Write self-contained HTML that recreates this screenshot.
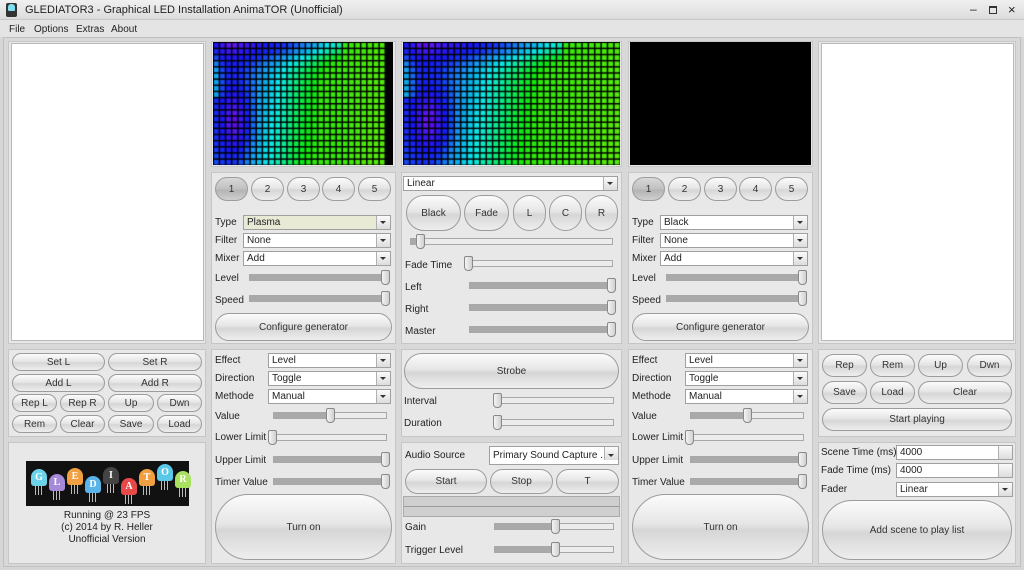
<!DOCTYPE html>
<html><head><meta charset="utf-8"><style>
*{box-sizing:border-box;margin:0;padding:0}
body{width:1024px;height:570px;overflow:hidden;background:#d6d6d6;font-family:"Liberation Sans",sans-serif;font-size:10px;color:#222;position:relative}
div,canvas{position:absolute}
.p{background:#e8e8e8;border:1px solid #c6c6c6}
.b{border:1px solid #9c9c9c;border-radius:999px;background:linear-gradient(#fbfbfb,#e6e6e6 45%,#d6d6d6 55%,#eeeeee);display:flex;align-items:center;justify-content:center;font-size:10px;color:#333}
.b.on{background:linear-gradient(#d8d8d8,#c0c0c0 50%,#b4b4b4 55%,#cfcfcf)}
.l{font-size:10px;color:#222;white-space:nowrap}
.c{background:#fff;border:1px solid #a0a0a0;height:15px;font-size:10px;line-height:13px;padding-left:3px;white-space:nowrap;overflow:hidden}
.c::after{content:"";position:absolute;right:0;top:0;width:13px;height:13px;border-left:1px solid #b0b0b0;background:linear-gradient(#fafafa,#ddd)}
.c i{position:absolute;right:4px;top:5px;width:0;height:0;border-left:3px solid transparent;border-right:3px solid transparent;border-top:3px solid #333;z-index:2}
.s{height:7px;border:1px solid #a8a8a8;background:#ececec}
.s .f{left:0;top:0;bottom:0;background:#a9a9a9}
.s .t{top:-5px;width:9px;height:15px;border:1px solid #888;border-radius:2px 2px 4px 4px;background:linear-gradient(90deg,#f4f4f4,#d0d0d0)}
.w{background:#fff;border:1px solid #b8b8b8}
</style></head><body>
<div style="left:0;top:0;width:1024px;height:20px;background:linear-gradient(#f0f0f0,#dcdcdc);border-bottom:1px solid #c8c8c8"></div>
<div style="left:6px;top:3px;width:11px;height:14px;background:#333;border-radius:2px"></div>
<div style="left:8px;top:4px;width:7px;height:7px;background:#7fe0f0;border-radius:3px 3px 1px 1px"></div>
<div class="l" style="left:25px;top:4px;font-size:11px;color:#222">GLEDIATOR3 - Graphical LED Installation AnimaTOR (Unofficial)</div>
<div class="l" style="left:970px;top:2px;font-size:12px">&#8211;</div>
<div style="left:989px;top:6px;width:8px;height:8px;border:1px solid #333;border-top-width:2px"></div>
<div class="l" style="left:1008px;top:2px;font-size:13px">&#215;</div>
<div style="left:0;top:20px;width:1024px;height:17px;background:#e4e4e4"></div>
<div class="l" style="left:9px;top:24px">File</div>
<div class="l" style="left:34px;top:24px">Options</div>
<div class="l" style="left:76px;top:24px">Extras</div>
<div class="l" style="left:111px;top:24px">About</div>
<div style="left:3px;top:37px;width:1018px;height:530px;background:#d8d8d8;border:1px solid #c0c0c0"></div>

<div class="p" style="left:8px;top:41px;width:198px;height:303px"></div>
<div class="w" style="left:11px;top:43px;width:193px;height:298px"></div>
<div class="p" style="left:818px;top:41px;width:198px;height:303px"></div>
<div class="w" style="left:821px;top:43px;width:193px;height:298px"></div>

<div class="p" style="left:211px;top:41px;width:185px;height:126px"></div>
<canvas id="c1" width="180" height="123" style="left:213px;top:42px"></canvas>
<div class="p" style="left:401px;top:41px;width:221px;height:126px"></div>
<canvas id="c2" width="217" height="123" style="left:403px;top:42px"></canvas>
<div class="p" style="left:628px;top:41px;width:185px;height:126px"></div>
<div style="left:630px;top:42px;width:181px;height:123px;background:#000"></div>

<div class="p" style="left:211px;top:172px;width:185px;height:172px"></div>
<div class="b on" style="left:215px;top:177px;width:33px;height:24px">1</div>
<div class="b" style="left:251px;top:177px;width:33px;height:24px">2</div>
<div class="b" style="left:287px;top:177px;width:33px;height:24px">3</div>
<div class="b" style="left:322px;top:177px;width:33px;height:24px">4</div>
<div class="b" style="left:358px;top:177px;width:33px;height:24px">5</div>
<div class="l" style="left:215px;top:217px">Type</div><div class="c" style="left:243px;top:215px;width:148px;background:#e8ead6">Plasma<i></i></div>
<div class="l" style="left:215px;top:235px">Filter</div><div class="c" style="left:243px;top:233px;width:148px">None<i></i></div>
<div class="l" style="left:215px;top:253px">Mixer</div><div class="c" style="left:243px;top:251px;width:148px">Add<i></i></div>
<div class="l" style="left:215px;top:273px">Level</div><div class="s" style="left:249px;top:274px;width:140px"><div class="f" style="right:0"></div><div class="t" style="left:131px"></div></div>
<div class="l" style="left:215px;top:295px">Speed</div><div class="s" style="left:249px;top:295px;width:140px"><div class="f" style="right:0"></div><div class="t" style="left:131px"></div></div>
<div class="b" style="left:215px;top:313px;width:177px;height:28px">Configure generator</div>

<div class="p" style="left:628px;top:172px;width:185px;height:172px"></div>
<div class="b on" style="left:632px;top:177px;width:33px;height:24px">1</div>
<div class="b" style="left:668px;top:177px;width:33px;height:24px">2</div>
<div class="b" style="left:704px;top:177px;width:33px;height:24px">3</div>
<div class="b" style="left:739px;top:177px;width:33px;height:24px">4</div>
<div class="b" style="left:775px;top:177px;width:33px;height:24px">5</div>
<div class="l" style="left:632px;top:217px">Type</div><div class="c" style="left:660px;top:215px;width:148px">Black<i></i></div>
<div class="l" style="left:632px;top:235px">Filter</div><div class="c" style="left:660px;top:233px;width:148px">None<i></i></div>
<div class="l" style="left:632px;top:253px">Mixer</div><div class="c" style="left:660px;top:251px;width:148px">Add<i></i></div>
<div class="l" style="left:632px;top:273px">Level</div><div class="s" style="left:666px;top:274px;width:140px"><div class="f" style="right:0"></div><div class="t" style="left:131px"></div></div>
<div class="l" style="left:632px;top:295px">Speed</div><div class="s" style="left:666px;top:295px;width:140px"><div class="f" style="right:0"></div><div class="t" style="left:131px"></div></div>
<div class="b" style="left:632px;top:313px;width:177px;height:28px">Configure generator</div>

<div class="p" style="left:401px;top:172px;width:221px;height:172px"></div>
<div class="c" style="left:403px;top:176px;width:215px">Linear<i></i></div>
<div class="b" style="left:406px;top:195px;width:55px;height:36px">Black</div>
<div class="b" style="left:464px;top:195px;width:45px;height:36px">Fade</div>
<div class="b" style="left:513px;top:195px;width:33px;height:36px">L</div>
<div class="b" style="left:549px;top:195px;width:33px;height:36px">C</div>
<div class="b" style="left:585px;top:195px;width:33px;height:36px">R</div>
<div class="s" style="left:410px;top:238px;width:203px"><div class="f" style="width:8px"></div><div class="t" style="left:5px"></div></div>
<div class="l" style="left:405px;top:260px">Fade Time</div><div class="s" style="left:464px;top:260px;width:149px"><div class="t" style="left:-1px"></div></div>
<div class="l" style="left:405px;top:282px">Left</div><div class="s" style="left:469px;top:282px;width:146px"><div class="f" style="right:0"></div><div class="t" style="left:137px"></div></div>
<div class="l" style="left:405px;top:304px">Right</div><div class="s" style="left:469px;top:304px;width:146px"><div class="f" style="right:0"></div><div class="t" style="left:137px"></div></div>
<div class="l" style="left:405px;top:326px">Master</div><div class="s" style="left:469px;top:326px;width:146px"><div class="f" style="right:0"></div><div class="t" style="left:137px"></div></div>

<div class="p" style="left:8px;top:349px;width:198px;height:88px"></div>
<div class="b" style="left:12px;top:353px;width:93px;height:18px">Set L</div>
<div class="b" style="left:108px;top:353px;width:94px;height:18px">Set R</div>
<div class="b" style="left:12px;top:374px;width:93px;height:18px">Add L</div>
<div class="b" style="left:108px;top:374px;width:94px;height:18px">Add R</div>
<div class="b" style="left:12px;top:394px;width:45px;height:18px">Rep L</div>
<div class="b" style="left:60px;top:394px;width:45px;height:18px">Rep R</div>
<div class="b" style="left:108px;top:394px;width:46px;height:18px">Up</div>
<div class="b" style="left:157px;top:394px;width:45px;height:18px">Dwn</div>
<div class="b" style="left:12px;top:415px;width:45px;height:18px">Rem</div>
<div class="b" style="left:60px;top:415px;width:45px;height:18px">Clear</div>
<div class="b" style="left:108px;top:415px;width:46px;height:18px">Save</div>
<div class="b" style="left:157px;top:415px;width:45px;height:18px">Load</div>
<div class="p" style="left:8px;top:442px;width:198px;height:122px"></div>
<div style="left:26px;top:461px;width:163px;height:45px;background:#111"></div>
<div id="leds"></div>
<div class="l" style="left:10px;top:510px;width:194px;text-align:center;line-height:12px">Running @ 23 FPS<br>(c) 2014 by R. Heller<br>Unofficial Version</div>

<div class="p" style="left:211px;top:349px;width:185px;height:215px"></div>
<div class="l" style="left:215px;top:355px">Effect</div><div class="c" style="left:268px;top:353px;width:123px">Level<i></i></div>
<div class="l" style="left:215px;top:373px">Direction</div><div class="c" style="left:268px;top:371px;width:123px">Toggle<i></i></div>
<div class="l" style="left:215px;top:391px">Methode</div><div class="c" style="left:268px;top:389px;width:123px">Manual<i></i></div>
<div class="l" style="left:215px;top:411px">Value</div><div class="s" style="left:273px;top:412px;width:114px"><div class="f" style="width:57px"></div><div class="t" style="left:52px"></div></div>
<div class="l" style="left:215px;top:432px">Lower Limit</div><div class="s" style="left:269px;top:434px;width:118px"><div class="t" style="left:-2px"></div></div>
<div class="l" style="left:215px;top:455px">Upper Limit</div><div class="s" style="left:273px;top:456px;width:116px"><div class="f" style="right:0"></div><div class="t" style="left:107px"></div></div>
<div class="l" style="left:215px;top:477px">Timer Value</div><div class="s" style="left:273px;top:478px;width:116px"><div class="f" style="right:0"></div><div class="t" style="left:107px"></div></div>
<div class="b" style="left:215px;top:494px;width:177px;height:66px">Turn on</div>

<div class="p" style="left:628px;top:349px;width:185px;height:215px"></div>
<div class="l" style="left:632px;top:355px">Effect</div><div class="c" style="left:685px;top:353px;width:123px">Level<i></i></div>
<div class="l" style="left:632px;top:373px">Direction</div><div class="c" style="left:685px;top:371px;width:123px">Toggle<i></i></div>
<div class="l" style="left:632px;top:391px">Methode</div><div class="c" style="left:685px;top:389px;width:123px">Manual<i></i></div>
<div class="l" style="left:632px;top:411px">Value</div><div class="s" style="left:690px;top:412px;width:114px"><div class="f" style="width:57px"></div><div class="t" style="left:52px"></div></div>
<div class="l" style="left:632px;top:432px">Lower Limit</div><div class="s" style="left:686px;top:434px;width:118px"><div class="t" style="left:-2px"></div></div>
<div class="l" style="left:632px;top:455px">Upper Limit</div><div class="s" style="left:690px;top:456px;width:116px"><div class="f" style="right:0"></div><div class="t" style="left:107px"></div></div>
<div class="l" style="left:632px;top:477px">Timer Value</div><div class="s" style="left:690px;top:478px;width:116px"><div class="f" style="right:0"></div><div class="t" style="left:107px"></div></div>
<div class="b" style="left:632px;top:494px;width:177px;height:66px">Turn on</div>

<div class="p" style="left:401px;top:349px;width:221px;height:88px"></div>
<div class="b" style="left:404px;top:353px;width:215px;height:36px">Strobe</div>
<div class="l" style="left:404px;top:396px">Interval</div><div class="s" style="left:494px;top:397px;width:120px"><div class="t" style="left:-2px"></div></div>
<div class="l" style="left:404px;top:418px">Duration</div><div class="s" style="left:494px;top:419px;width:120px"><div class="t" style="left:-2px"></div></div>

<div class="p" style="left:401px;top:442px;width:221px;height:122px"></div>
<div class="l" style="left:405px;top:450px">Audio Source</div>
<div class="c" style="left:489px;top:446px;width:130px;height:19px;line-height:17px">Primary Sound Capture ...<i style="top:7px"></i></div>
<div class="b" style="left:405px;top:469px;width:82px;height:25px">Start</div>
<div class="b" style="left:490px;top:469px;width:63px;height:25px">Stop</div>
<div class="b" style="left:556px;top:469px;width:63px;height:25px">T</div>
<div style="left:403px;top:496px;width:217px;height:21px;background:#cfcfcf;border:1px solid #aaa"></div>
<div style="left:404px;top:506px;width:215px;height:1px;background:#999"></div>
<div class="l" style="left:405px;top:522px">Gain</div><div class="s" style="left:494px;top:523px;width:120px"><div class="f" style="width:60px"></div><div class="t" style="left:56px"></div></div>
<div class="l" style="left:405px;top:545px">Trigger Level</div><div class="s" style="left:494px;top:546px;width:120px"><div class="f" style="width:60px"></div><div class="t" style="left:56px"></div></div>

<div class="p" style="left:818px;top:349px;width:198px;height:88px"></div>
<div class="b" style="left:822px;top:354px;width:45px;height:23px">Rep</div>
<div class="b" style="left:870px;top:354px;width:45px;height:23px">Rem</div>
<div class="b" style="left:918px;top:354px;width:45px;height:23px">Up</div>
<div class="b" style="left:967px;top:354px;width:45px;height:23px">Dwn</div>
<div class="b" style="left:822px;top:381px;width:45px;height:23px">Save</div>
<div class="b" style="left:870px;top:381px;width:45px;height:23px">Load</div>
<div class="b" style="left:918px;top:381px;width:94px;height:23px">Clear</div>
<div class="b" style="left:822px;top:408px;width:190px;height:23px">Start playing</div>

<div class="p" style="left:818px;top:442px;width:198px;height:122px"></div>
<div class="l" style="left:821px;top:447px">Scene Time (ms)</div><div class="c" style="left:896px;top:445px;width:117px">4000</div>
<div class="l" style="left:821px;top:465px">Fade Time (ms)</div><div class="c" style="left:896px;top:463px;width:117px">4000</div>
<div class="l" style="left:821px;top:484px">Fader</div><div class="c" style="left:896px;top:482px;width:117px">Linear<i></i></div>
<div class="b" style="left:822px;top:500px;width:190px;height:60px">Add scene to play list</div>

<script>
function hueOf(t){
 var pts=[[-1.3,272],[-0.9,250],[-0.3,232],[0.1,200],[0.4,175],[0.7,140],[1.0,110],[2,100]];
 if(t<=pts[0][0])return pts[0][1];
 for(var i=1;i<pts.length;i++){if(t<=pts[i][0]){var a=pts[i-1],b=pts[i];return a[1]+(b[1]-a[1])*(t-a[0])/(b[0]-a[0]);}}
 return 100;
}
function draw(id,w,h,cols,rows,pad){
 var c=document.getElementById(id).getContext("2d");
 c.fillStyle="#000";c.fillRect(0,0,w,h);
 var cw=(w-pad)/cols, ch=h/rows;
 for(var y=0;y<rows;y++)for(var x=0;x<cols;x++){
  var u=(x+0.5)/cols,v=(y+0.5)/rows;
  var t=(u-0.28+0.1*v)*2.6;
  t-=0.9*Math.exp(-Math.pow((u-0.13)/0.08,2)-Math.pow((v-0.65)/0.25,2));
  t-=0.7*Math.exp(-Math.pow(v/0.14,2))*(u<0.75?1:0.2);
  t+=0.8*Math.exp(-Math.pow(u/0.06,2))*(v<0.45?1:0.3);
  t-=0.3*Math.exp(-Math.pow((u-0.72)/0.1,2)-Math.pow((v-0.85)/0.2,2));
  var hue=hueOf(t);
  c.fillStyle="hsl("+hue+",90%,"+(hue>200&&hue<260?52:48)+"%)";
  c.fillRect(x*cw+1,y*ch+1,cw-1.5,ch-1.5);
 }
}
draw("c1",180,123,28,20,8);
draw("c2",217,123,34,20,0);
var L=["G","L","E","D","I","A","T","O","R"],C=["#6cd3e8","#a68ad8","#f0a040","#5ab4e8","#444","#e84848","#f0a040","#5ac8e8","#a8e060"],Y=[469,474,468,476,467,478,469,464,471];
var h="";
for(var i=0;i<9;i++){var x=31+i*18;
 h+='<div style="left:'+(x+4)+'px;top:'+(Y[i]+12)+'px;width:8px;height:14px;background:repeating-linear-gradient(90deg,#bbb 0 1px,transparent 1px 3px)"></div>';
 h+='<div style="left:'+x+'px;top:'+Y[i]+'px;width:16px;height:17px;border-radius:8px 8px 3px 3px;background:'+C[i]+';color:#fff;font:bold 10px Liberation Serif,serif;text-align:center;line-height:17px">'+L[i]+'</div>';}
document.getElementById("leds").innerHTML=h;
</script>
</body></html>
